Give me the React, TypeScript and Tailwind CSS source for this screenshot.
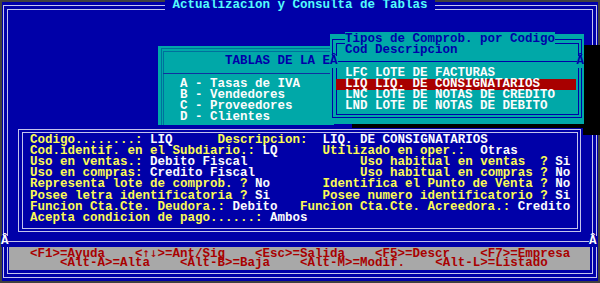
import React from "react";

type Seg = [number, string, string];

const Y = "text-[#fcfc54]";
const W = "text-[#fcfcfc]";

function Line({ base, segs, className }: { base: number; segs: Seg[]; className?: string }) {
  let cursor = base;
  const out: React.ReactNode[] = [];
  segs.forEach(([col, text, cls], i) => {
    const gap = Math.max(0, col - cursor);
    const parts = text.split("↑↓");
    out.push(
      <span key={i} className={cls}>
        {" ".repeat(gap)}
        {parts.length === 2 ? (
          <>
            {parts[0]}
            <span className="inline-block w-[15px] [font-family:'DejaVu_Sans_Mono',monospace] font-normal">↑↓</span>
            {parts[1]}
          </>
        ) : (
          text
        )}
      </span>
    );
    cursor = col + (parts.length === 2 ? text.length : text.length);
  });
  return <div className={"h-[11.2px] leading-[11.2px] whitespace-pre " + (className ?? "")}>{out}</div>;
}

const formRows: Seg[][] = [
  [[4, "Codigo........:", Y], [20, "LIQ", W], [29, "Descripcion:", Y], [43, "LIQ. DE CONSIGNATARIOS", W]],
  [[4, "Cod.identif. en el Subdiario.:", Y], [35, "LQ", W], [43, "Utilizado en oper.:", Y], [64, "Otras", W]],
  [[4, "Uso en ventas.:", Y], [20, "Debito Fiscal", W], [48, "Uso habitual en ventas  ?", Y], [74, "Si", W]],
  [[4, "Uso en compras:", Y], [20, "Credito Fiscal", W], [48, "Uso habitual en compras ?", Y], [74, "No", W]],
  [[4, "Representa lote de comprob. ?", Y], [34, "No", W], [43, "Identifica el Punto de Venta ?", Y], [74, "No", W]],
  [[4, "Posee letra identificatoria ?", Y], [34, "Si", W], [43, "Posee numero identificatorio ?", Y], [74, "Si", W]],
  [[4, "Funcion Cta.Cte. Deudora.:", Y], [31, "Debito", W], [40, "Funcion Cta.Cte. Acreedora.:", Y], [69, "Credito", W]],
  [[4, "Acepta condicion de pago......:", Y], [36, "Ambos", W]],
];

const R = "";
const keyRows: Seg[][] = [
  [[4, "<F1>=Ayuda", R], [18, "<↑↓>=Ant/Sig", R], [34, "<Esc>=Salida", R], [50, "<F5>=Descr", R], [64, "<F7>=Empresa", R]],
  [[8, "<Alt-A>=Alta", R], [24, "<Alt-B>=Baja", R], [40, "<Alt-M>=Modif.", R], [58, "<Alt-L>=Listado", R]],
];

const items = ["LFC LOTE DE FACTURAS", "LIQ LIQ. DE CONSIGNATARIOS", "LNC LOTE DE NOTAS DE CREDITO", "LND LOTE DE NOTAS DE DEBITO"];

export default function App() {
  return (
    <div className="relative w-[600px] h-[283px] overflow-hidden bg-[#0000a8] [font-family:'Liberation_Mono','DejaVu_Sans_Mono',monospace] text-[12.5px] font-bold shadow-[inset_0_0_0_2px_#404040]">
      {/* popup shadow */}
      <div className="absolute left-[584px] top-[45.3px] w-[16px] h-[89.5px] bg-black" />
      <div className="absolute left-[352px] top-[124px] w-[232px] h-[11px] bg-black" />

      {/* main frame */}
      <div className="mx-[3px] mt-[5px] h-[273px] border border-[#c4c4ec] p-[3px]">
        <div className="flex h-full flex-col border border-[#c4c4ec]">
          <div className="h-[117.5px] shrink-0" />
          {/* form window */}
          <div className="relative ml-[9px] h-[105.5px] w-[566px] shrink-0 bg-[#0000a8] pl-[13px] pt-[7.2px]">
            <div className="absolute left-[1px] top-[1px] right-[2px] bottom-[1px] border border-[#c4c4ec]" />
            <div className="absolute left-[4.5px] top-[4px] right-[5.5px] bottom-[4.5px] border border-[#c4c4ec]" />
            {formRows.map((segs, i) => (
              <Line key={i} base={4} segs={segs} />
            ))}
          </div>
          {/* separator */}
          <div className="h-[14px] shrink-0 pt-[8px]">
            <div className="h-px bg-[#c4c4ec]" />
          </div>
          {/* key bar */}
          <div className="ml-[1px] mr-[2px] h-[23px] shrink-0 bg-[#a8a8a8] pl-[21px] text-[#a80000]">
            {keyRows.map((segs, i) => (
              <Line key={i} base={4} segs={segs} />
            ))}
          </div>
        </div>
      </div>

      {/* title over top border */}
      <div className="absolute left-[165px] top-[0.3px] h-[11.2px] whitespace-pre bg-[#0000a8] leading-[11.2px] text-[#54fcfc]">
        {" Actualizacion y Consulta de Tablas "}
      </div>

      {/* junction glyphs on the separator */}
      <div className="absolute left-[1px] top-[235.5px] h-[11.2px] w-[7px] bg-[#0000a8] leading-[11.2px] text-[#fcfcfc]">Â</div>
      <div className="absolute left-[589px] top-[235.5px] h-[11.2px] w-[9px] bg-[#0000a8] leading-[11.2px] text-[#fcfcfc]">Â</div>

      {/* TABLAS window */}
      <div className="absolute left-[158px] top-[45.5px] h-[79.5px] w-[176px] overflow-hidden bg-[#00a8a8]">
        <div className="absolute left-[2.5px] top-[2.5px] -right-[20px] -bottom-[20px] border-l border-t border-[#00709c]" />
        <div className="absolute left-[5px] top-[5px] -right-[20px] -bottom-[20px] border-l border-t border-[#00709c]" />
        <div className="relative pt-[10.8px]">
          <div className="h-[11.2px] whitespace-pre pl-[67px] leading-[11.2px] text-[#0000a8]">TABLAS DE LA EMPRESA</div>
          <div className="flex h-[11.2px] items-center pl-[5px]">
            <div className="h-px flex-1 bg-[#1030a0]" />
          </div>
          {["A - Tasas de IVA", "B - Vendedores", "C - Proveedores", "D - Clientes"].map((t) => (
            <div key={t} className="h-[11.2px] whitespace-pre pl-[22px] leading-[11.2px] text-[#fcfcfc]">
              {t}
            </div>
          ))}
        </div>
      </div>

      {/* Tipos de Comprob. popup */}
      <div className="absolute left-[330px] top-[34px] h-[90px] w-[254px] bg-[#00a8a8]">
        <div className="absolute left-[2px] top-[5px] right-[2.5px] bottom-[6px] border border-[#0000a8]" />
        <div className="absolute left-[5.5px] top-[8.5px] right-[5.5px] bottom-[9.5px] border border-[#0000a8]" />
        <div className="relative">
          <div className="h-[11.2px] whitespace-pre pl-[15px] leading-[11.2px] text-[#0000a8]">
            <span className="bg-[#00a8a8]">Tipos de Comprob. por Codigo</span>
          </div>
          <div className="h-[11.2px] whitespace-pre pl-[15px] leading-[11.2px] text-[#0000a8]">Cod Descripcion</div>
          <div className="flex h-[11.2px] items-center text-[#0000a8]">
            <span className="h-full w-[7.5px] bg-[#00a8a8] leading-[11.2px]">Â</span>
            <div className="h-px w-[239px] bg-[#0000a8]" />
            <span className="h-full w-[7.5px] bg-[#00a8a8] leading-[11.2px]">Â</span>
          </div>
          {items.map((t, i) => (
            <div
              key={t}
              className={
                "ml-[6px] h-[11.2px] w-[240px] whitespace-pre pl-[9px] leading-[11.2px] text-[#fcfcfc] " +
                (i === 1 ? "bg-[#a80000]" : "")
              }
            >
              {t}
            </div>
          ))}
        </div>
      </div>
    </div>
  );
}
